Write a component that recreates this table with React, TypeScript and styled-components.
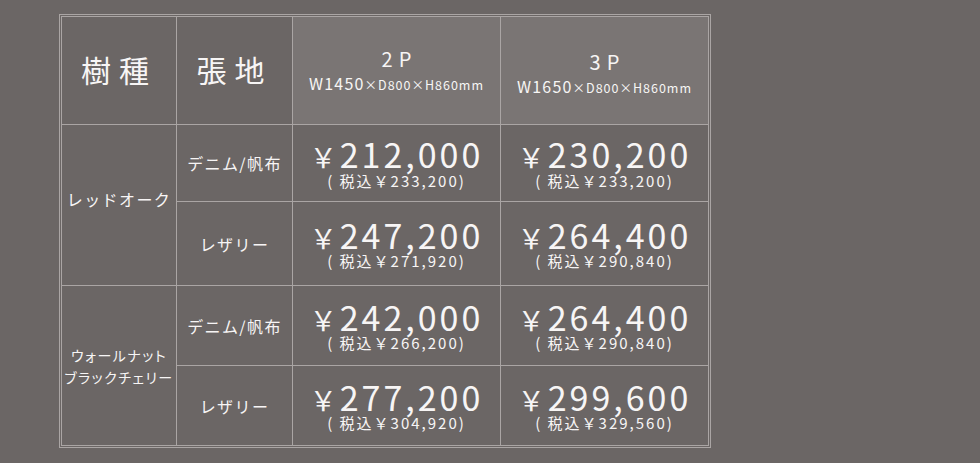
import React from 'react'
import { createGlobalStyle, styled } from 'styled-components'

const GlobalStyle = createGlobalStyle`
  html, body {
    margin: 0;
    padding: 0;
    background: #6b6665;
  }
  body {
    font-family: 'Noto Sans CJK JP', 'Noto Sans', sans-serif;
    color: #f7f5f5;
  }
`

const LINE = '#aaa5a4'

const Page = styled.div`
  width: 980px;
  height: 463px;
  padding: 14px 0 0 59px;
  box-sizing: border-box;
  background: #6b6665;
`

const Frame = styled.div`
  width: 652px;
  box-sizing: border-box;
  border: 1px solid ${LINE};
  padding: 1px;
  background: #6b6665;
`

const Grid = styled.div`
  display: grid;
  grid-template-columns: 114px 115px 207px 207px;
  grid-template-rows: 107px 76px 83px 79px 79px;
  gap: 1px;
  border: 1px solid ${LINE};
  background: ${LINE};
`

const Cell = styled.div<{
  $col: number
  $row: number
  $span?: number
  $light?: boolean
  $shift?: number
}>`
  grid-column: ${(p) => p.$col};
  grid-row: ${(p) => p.$row} / span ${(p) => p.$span ?? 1};
  background: ${(p) => (p.$light ? '#7a7574' : '#6b6665')};
  display: flex;
  flex-direction: column;
  align-items: center;
  justify-content: center;
  padding-top: ${(p) => Math.max(p.$shift ?? 0, 0)}px;
  padding-bottom: ${(p) => Math.max(-(p.$shift ?? 0), 0)}px;
  box-sizing: border-box;
  text-align: center;
`

const HeadTitle = styled.div`
  font-size: 30px;
  letter-spacing: 8px;
  line-height: 1;
  margin-bottom: 4px;
`

const SizeName = styled.div`
  font-size: 20px;
  letter-spacing: 6px;
  padding-left: 6px;
  line-height: 1;
`

const Dimension = styled.div`
  margin-top: 6px;
  font-size: 16px;
  letter-spacing: 1.2px;
  line-height: 1;
  small {
    font-size: 12.5px;
    letter-spacing: 1px;
  }
`

const Label = styled.div<{ $small?: boolean }>`
  font-size: ${(p) => (p.$small ? 14 : 16)}px;
  letter-spacing: ${(p) => (p.$small ? 1.5 : 1.4)}px;
  line-height: ${(p) => (p.$small ? 22 : 20)}px;
  font-feature-settings: ${(p) => (p.$small ? "'palt'" : 'normal')};
`

const Price = styled.div`
  font-size: 34px;
  letter-spacing: 3px;
  line-height: 1.05;
  font-weight: 400;
`

const Yen = styled.span`
  font-size: 27px;
  letter-spacing: 3px;
`

const TaxIn = styled.div`
  font-size: 15px;
  letter-spacing: 2px;
  line-height: 1.2;
`

const rows = [
  { fabric: 'デニム/帆布', p2: '212,000', t2: '233,200', p3: '230,200', t3: '233,200' },
  { fabric: 'レザリー', p2: '247,200', t2: '271,920', p3: '264,400', t3: '290,840' },
  { fabric: 'デニム/帆布', p2: '242,000', t2: '266,200', p3: '264,400', t3: '290,840' },
  { fabric: 'レザリー', p2: '277,200', t2: '304,920', p3: '299,600', t3: '329,560' },
]

const PriceBlock = ({ price, tax }: { price: string; tax: string }) => (
  <>
    <Price>
      <Yen>￥</Yen>
      {price}
    </Price>
    <TaxIn>( 税込￥{tax})</TaxIn>
  </>
)

export default function App() {
  return (
    <Page>
      <GlobalStyle />
      <Frame>
        <Grid>
          <Cell $col={1} $row={1}>
            <HeadTitle>樹種</HeadTitle>
          </Cell>
          <Cell $col={2} $row={1}>
            <HeadTitle>張地</HeadTitle>
          </Cell>
          <Cell $col={3} $row={1} $light>
            <SizeName>2P</SizeName>
            <Dimension>
              W1450<small>×D800×H860mm</small>
            </Dimension>
          </Cell>
          <Cell $col={4} $row={1} $light $shift={5}>
            <SizeName>3P</SizeName>
            <Dimension>
              W1650<small>×D800×H860mm</small>
            </Dimension>
          </Cell>

          <Cell $col={1} $row={2} $span={2} $shift={-12}>
            <Label>レッドオーク</Label>
          </Cell>
          <Cell $col={1} $row={4} $span={2}>
            <Label $small>ウォールナット</Label>
            <Label $small>ブラックチェリー</Label>
          </Cell>

          {rows.map((r, i) => (
            <React.Fragment key={i}>
              <Cell $col={2} $row={i + 2}>
                <Label>{r.fabric}</Label>
              </Cell>
              <Cell $col={3} $row={i + 2}>
                <PriceBlock price={r.p2} tax={r.t2} />
              </Cell>
              <Cell $col={4} $row={i + 2}>
                <PriceBlock price={r.p3} tax={r.t3} />
              </Cell>
            </React.Fragment>
          ))}
        </Grid>
      </Frame>
    </Page>
  )
}
